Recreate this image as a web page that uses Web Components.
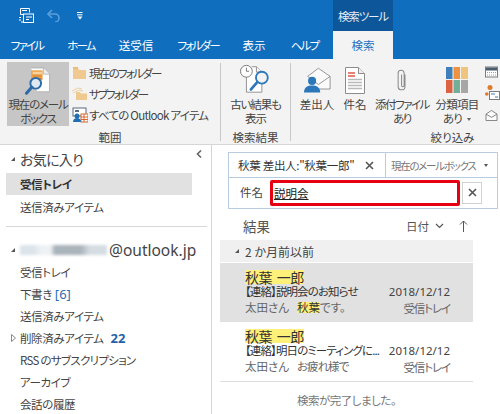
<!DOCTYPE html>
<html lang="ja"><head><meta charset="utf-8"><title>Outlook</title>
<style>
html,body{margin:0;padding:0;width:500px;height:414px;overflow:hidden;background:#fff;font-family:"Noto Sans CJK JP","Noto Sans",sans-serif;color:#444}
</style></head><body>
<ol-app></ol-app>
<script>
const FONT='"Noto Sans CJK JP","Noto Sans",sans-serif';
function def(name,css,html){
  customElements.define(name,class extends HTMLElement{
    constructor(){super();const r=this.attachShadow({mode:'open'});this._css=css;this._html=html;}
    connectedCallback(){const h=this._html;
      this.shadowRoot.innerHTML='<style>'+this._css+'*,:host{font-feature-settings:"palt" !important}</style>'+(typeof h==='function'?h(this):h);}
  });
}
const ICONS={
 mailbox:`<svg width="26" height="28" viewBox="0 0 34 36"><path d="M8 1h16l8 8v23H16" fill="#fff" stroke="#a8a8a8"/><path d="M24 1v8h8" fill="#eee" stroke="#a8a8a8"/><rect x="8" y="4" width="15" height="13" fill="#f0a54c"/><rect x="10" y="6" width="12" height="3" fill="#f7d3a2"/><rect x="10" y="11" width="12" height="1" fill="#c97a26"/><rect x="10" y="14" width="12" height="1" fill="#c97a26"/><circle cx="14" cy="21" r="7" fill="#dfe9f2" stroke="#2c6aa8" stroke-width="2.500"/><path d="M9 26 2 34" stroke="#2c6aa8" stroke-width="4" stroke-linecap="round"/></svg>`,
 folder:`<svg width="15" height="14" viewBox="0 0 15 14"><path d="M1 2.500h5l1.500 1.500H14V13H1z" fill="#efc98f"/><rect x="1" y="1" width="5" height="2" fill="#e9bd7b"/></svg>`,
 subfolder:`<svg width="16" height="14" viewBox="0 0 16 14"><path d="M0 4l6-3 4 1" fill="none" stroke="#ecd0a0"/><path d="M1 6l6-3 4 1" fill="none" stroke="#ecd0a0"/><path d="M4 5h4l1 1.500h6V13H4z" fill="#efc98f"/></svg>`,
 allitems:`<svg width="16" height="16" viewBox="0 0 16 16"><rect x="1" y="1" width="13" height="8" fill="#fff" stroke="#5a6d80"/><rect x="3" y="3" width="4" height="2" fill="#5a6d80"/><rect x="9" y="7" width="7" height="8" fill="#fff" stroke="#d9692c"/><path d="M9 10h7M9 12.500h7M12 7v8" stroke="#d9692c"/><circle cx="5" cy="9" r="2.500" fill="#1f6fb5"/><path d="M1 15c0-3 2-4 4-4s4 1 4 4z" fill="#1f6fb5"/></svg>`,
 old:`<svg width="31" height="30" viewBox="0 0 34 33"><path d="M7 9V31H24V9l-6-6h-5" fill="#fff" stroke="#8a8a8a"/><path d="M18 3v6h6" fill="#f3f3f3" stroke="#8a8a8a"/><circle cx="7" cy="8" r="6.500" fill="#fff" stroke="#6f6f6f"/><path d="M7 4v4h3" fill="none" stroke="#6f6f6f"/><circle cx="24" cy="15" r="6.500" fill="#f3f3f3" stroke="#2c76ba" stroke-width="2"/><path d="M19 20l-7 8" stroke="#2c76ba" stroke-width="3" stroke-linecap="round"/></svg>`,
 from:`<svg width="27" height="26" viewBox="0 0 30 28"><path d="M4 10 16 1l13 9v14H14" fill="#fbfbfb" stroke="#8c8c8c"/><path d="M4 10l12 9 13-9" fill="none" stroke="#8c8c8c"/><circle cx="9" cy="15" r="4.500" fill="#2c76ba"/><path d="M0 28c0-6 4-8 9-8s9 2 9 8z" fill="#2c76ba"/></svg>`,
 subject:`<svg width="20" height="27" viewBox="0 0 20 27"><path d="M.5.500h13l6 6v20H.5z" fill="#fff" stroke="#8c8c8c"/><path d="M13.500.500v6h6" fill="#eee" stroke="#8c8c8c"/><path d="M3 6h7M3 9h7" stroke="#dd5a45" stroke-width="1.300"/><path d="M3 12.500h14M3 15.500h14M3 18.500h14M3 21.500h14" stroke="#b9b9b9" stroke-width="1.300"/></svg>`,
 clip:`<svg width="12" height="26" viewBox="0 0 14 27"><path d="M10.500 7v14a4 4 0 0 1-8 0V5.500a3.500 3.500 0 0 1 7 0V20a1.500 1.500 0 0 1-3 0V7" fill="none" stroke="#8a8a8a" stroke-width="1.200"/></svg>`,
 cat:`<svg width="22" height="26" viewBox="0 0 22 26"><rect width="6.500" height="12" fill="#3f7fba"/><rect x="7.500" width="6.500" height="12" fill="#ee9240"/><rect x="15" width="7" height="12" fill="#efc47e"/><rect y="13" width="6.500" height="13" fill="#dd6244"/><rect x="7.500" y="13" width="6.500" height="13" fill="#72ae98"/><rect x="15" y="13" width="7" height="13" fill="#a6a6a6"/></svg>`,
 cal:`<svg width="13" height="12" viewBox="0 0 13 11"><rect x=".5" y=".5" width="12" height="10" fill="#fff" stroke="#7b7b7b"/><rect x="1" y="1" width="11" height="3" fill="#4b5c6c"/><path d="M2 6h9M2 8.500h9" stroke="#8da0b2" stroke-dasharray="1 1"/></svg>`,
 flag:`<svg width="15" height="15" viewBox="0 0 15 15"><circle cx="5" cy="2.500" r="2.500" fill="#e07b2c"/><circle cx="1.800" cy="9" r="1.800" fill="#e07b2c"/><rect x="4.500" y="6.500" width="10" height="8" fill="#fff" stroke="#7b7b7b"/><path d="M6 9h4M10 12h3" stroke="#3f7fba"/></svg>`,
 read:`<svg width="13" height="11" viewBox="0 0 13 12"><path d="M.5 4.500 6.500.5l6 4v7H.5z" fill="#fbfbfb" stroke="#7b7b7b"/><path d="M.5 4.500l6 3.500 6-3.500" fill="none" stroke="#7b7b7b"/></svg>`
};

def('ol-titlebar',`:host{display:flex;height:31px;background:#106ebe;align-items:center;color:#fff;font:11.5px ${FONT}}
 .ql{width:333px;display:flex;align-items:center;padding-left:19px;box-sizing:border-box;height:31px}
 .ql svg{display:block}.undo{margin-left:13px}.more{margin-left:16px}
 .tool{width:60px;height:31px;background:#0d5699;display:flex;align-items:center;justify-content:center;color:#e6eef6;white-space:nowrap;letter-spacing:-1.100px}`,
 `<div class="ql">
  <svg width="15" height="15" viewBox="0 0 15 15" fill="none" stroke="#fff"><path d="M1.500.500h9v4M1.500.500v6h3"/><path d="M3 2.500h5M0 9.500h2M0 12h2M2 14h2" /><rect x="4.500" y="6" width="10" height="8.500"/><path d="M7 9h6M7 11.500h3"/></svg>
  <svg class="undo" width="14" height="13" viewBox="0 0 14 13" fill="none" stroke="#5b9fd9" stroke-width="1.600"><path d="M5 1 1 5l4 4"/><path d="M1 5h7a4 4 0 0 1 0 8"/></svg>
  <svg class="more" width="6" height="8" viewBox="0 0 6 8"><path d="M0 .500h5.500M0 2.800h5.500" stroke="#fff"/><path d="M.5 4.500h5L3 7.500z" fill="#fff"/></svg>
 </div><div class="tool">検索ツール</div>`);

def('ol-tabs',`:host{display:flex;height:28px;background:#106ebe;font:11.5px ${FONT};color:#fff}
 span{display:flex;align-items:center;justify-content:center;height:27px;white-space:nowrap}
 .on{background:#f3f3f3;color:#1d74bf;height:28px}`,
 ()=>[['ファイル',54,-1.8],['ホーム',54,-1.8],['送受信',56,0],['フォルダー',68,-2],['表示',44,0],['ヘルプ',57,-1.8]].map(([t,w,l])=>`<span style="width:${w}px;letter-spacing:${l}px">${t}</span>`).join('')+'<span class="on" style="width:60px">検索</span>');

def('rb-group',`:host{display:flex;flex-direction:column;height:82px;box-sizing:border-box}
 .c{display:flex;height:63px}
 .l{height:19px;text-align:center;font:11.5px/24px ${FONT};color:#444;white-space:nowrap}`,
 e=>`<div class="c"><slot></slot></div><div class="l" style="padding-right:${e.getAttribute('lpad')||0}px;padding-left:${e.getAttribute('lpadl')||0}px">${e.getAttribute('label')}</div>`);

def('rb-large',`:host{display:flex;flex-direction:column;align-items:center;box-sizing:border-box;font:11.5px/13.500px ${FONT};color:#444;text-align:center;white-space:nowrap}
 :host([on]){background:#c6c6c6}
 .i{height:36px;box-sizing:border-box;display:flex;align-items:flex-start;justify-content:center}
 .i svg{display:block}`,
 e=>`<div class="i" style="padding-top:${e.getAttribute('ip')||5}px">${ICONS[e.getAttribute('icon')]}</div><div><slot></slot></div>`);

def('rb-small',`:host{display:flex;align-items:center;height:21px;font:11.5px ${FONT};color:#444;white-space:nowrap}
 .i{width:17px;display:flex;justify-content:center;margin-right:1px}`,
 e=>`<span class="i">${ICONS[e.getAttribute('icon')]}</span><slot></slot>`);

def('ol-ribbon',`:host{display:flex;height:86px;background:#f3f3f3;border-bottom:1px solid #d6d6d6;box-sizing:border-box;padding-top:3px;overflow:hidden}
 .sep{width:1px;height:78px;margin-top:1px;background:#c8c8c8;flex:none}
 .stack{display:flex;flex-direction:column;padding-top:1px;margin-left:2px}
 .side{display:flex;flex-direction:column;padding:4px 0 0 1px}
 .side span{display:block;line-height:0}
 .side span+span{margin-top:7px}.side span+span+span{margin-top:10px}
 .ar{display:inline-block;width:0;height:0;margin:0 0 2px 5px;border-left:2.500px solid transparent;border-right:2.500px solid transparent;border-top:3px solid #666}`,
 `<rb-group label="範囲" lpad="7" style="width:220px;padding-left:7px">
   <rb-large icon="mailbox" on style="width:62px;height:64px;letter-spacing:-1.200px">現在のメール<br>ボックス</rb-large>
   <div class="stack"><rb-small icon="folder" style="letter-spacing:-1.700px">現在のフォルダー</rb-small><rb-small icon="subfolder" style="letter-spacing:-2px">サブフォルダー</rb-small><rb-small icon="allitems" style="letter-spacing:-.75px">すべての Outlook アイテム</rb-small></div>
  </rb-group><i class="sep"></i>
  <rb-group label="検索結果" style="width:69px"><rb-large icon="old" ip="2" style="width:69px;letter-spacing:-1.100px">古い結果も<br>表示</rb-large></rb-group><i class="sep"></i>
  <rb-group label="絞り込み" lpadl="107" style="width:209px;padding-left:7px">
   <rb-large icon="from" style="width:38px">差出人</rb-large>
   <rb-large icon="subject" style="width:38px">件名</rb-large>
   <rb-large icon="clip" style="width:56px;letter-spacing:-1.500px">添付ファイル<br>あり</rb-large>
   <rb-large icon="cat" style="width:54px;letter-spacing:-.8px">分類項目<br>あり<i class="ar"></i></rb-large>
   <div class="side"><span>${ICONS.cal}</span><span>${ICONS.flag}</span><span>${ICONS.read}</span></div>
  </rb-group>`);

def('folder-row',`:host{display:flex;align-items:center;height:22px;padding-left:14px;font:11.5px ${FONT};color:#444;white-space:nowrap;position:relative;box-sizing:border-box;letter-spacing:-.4px}
 :host([sel]){background:#e1e1e1;font-weight:700;color:#333;width:186px}
 .t{position:absolute;left:5px;top:7px;display:block}
 .b{color:#2a6fb5;margin-left:3px;font:13px "Noto Sans",sans-serif;letter-spacing:0}
 .n{color:#1f62aa;font:700 13px "Noto Sans",sans-serif;margin-left:7px;letter-spacing:0}`,
 e=>`${e.hasAttribute('tri')?'<svg class="t" width="5" height="8" viewBox="0 0 5 8"><path d="M.5.500 4.500 4 .5 7.500z" fill="#fff" stroke="#888"/></svg>':''}<slot></slot>${e.getAttribute('bracket')?`<span class="b">[${e.getAttribute('bracket')}]</span>`:''}${e.getAttribute('num')?`<span class="n">${e.getAttribute('num')}</span>`:''}`);

def('folder-pane',`:host{display:block;width:212px;height:269px;box-sizing:border-box;border-right:1px solid #d4d4d4;position:relative;font-family:${FONT}}
 .wrap{padding:3px 0 0 6px}
 .h{display:flex;align-items:center;height:22px;font-size:14px;color:#444;padding-left:5px;gap:5px;margin-bottom:3px;letter-spacing:-.7px}
 .tr{width:0;height:0;border-right:4.500px solid #555;border-top:4.500px solid transparent}
 hr{border:0;border-top:1px solid #d8d8d8;margin:8px 4px 12px 0}
 .acct{display:flex;align-items:center;height:22px;padding-left:5px;gap:5px;font:15.500px "Noto Sans",sans-serif;color:#444}
 .blur{display:inline-block;width:87px;height:10px;background:linear-gradient(90deg,#dbe4ea 0 15%,#eef2f4 25% 35%,#aab4bb 40% 70%,#d5dde2 80% 100%);filter:blur(1.500px);margin-right:-3px}
 .col{position:absolute;left:196px;top:5px}
 `,
 `<div class="wrap">
   <svg class="col" width="6" height="8" viewBox="0 0 6 8"><path d="M5 .500 1.500 4 5 7.500" fill="none" stroke="#666" stroke-width="1.600"/></svg>
   <div class="h"><i class="tr"></i>お気に入り</div>
   <folder-row sel>受信トレイ</folder-row>
   <folder-row style="margin-top:1px">送信済みアイテム</folder-row>
   <hr>
   <div class="acct"><i class="tr"></i><span class="blur"></span>@outlook.jp</div>
   <folder-row>受信トレイ</folder-row>
   <folder-row bracket="6">下書き</folder-row>
   <folder-row>送信済みアイテム</folder-row>
   <folder-row tri num="22">削除済みアイテム</folder-row>
   <folder-row style="letter-spacing:-.7px">RSS のサブスクリプション</folder-row>
   <folder-row>アーカイブ</folder-row>
   <folder-row style="height:21px">会話の履歴</folder-row>
  </div>`);

def('search-box',`:host{display:block;margin-left:16px;width:270px;height:57px;box-sizing:border-box;border:1px solid #b9cde0;font:11.5px ${FONT};color:#444}
 .r1{display:flex;height:24px;border-bottom:1px solid #b9cde0}
 .q{width:157px;display:flex;align-items:center;padding-left:9px;box-sizing:border-box;color:#333;white-space:nowrap;border-right:1px solid #b9cde0;font-size:11.5px;letter-spacing:-.3px}
 .q span{flex:1}.q svg{margin-right:11px}
 .scope{flex:1;display:flex;align-items:center;padding-left:5px;color:#777;font-size:10.500px;white-space:nowrap;gap:9px;letter-spacing:-1.300px}
 .ar{width:0;height:0;border-left:2.500px solid transparent;border-right:2.500px solid transparent;border-top:3px solid #555}
 .r2{display:flex;align-items:center;height:31px}
 .k{width:41px;padding-left:11px;box-sizing:border-box;margin-top:-4px}
 .red{width:190px;height:26px;box-sizing:border-box;border:3px solid #e60012;border-radius:2px;display:flex;align-items:center;padding-left:1px;margin-top:-1px}
 .red u{color:#222;font-size:11.500px;text-decoration-thickness:1px}
 .x{width:20px;height:22px;box-sizing:border-box;border:1px solid #d2d2d2;margin-left:2px;margin-top:-2px;display:flex;align-items:center;justify-content:center}`,
 `<div class="r1"><div class="q"><span>秋葉 差出人:"秋葉一郎"</span><svg width="9" height="9" viewBox="0 0 9 9"><path d="M1 1l7 7M8 1 1 8" stroke="#555" stroke-width="1.600"/></svg></div><div class="scope">現在のメールボックス<i class="ar"></i></div></div>
  <div class="r2"><div class="k">件名</div><div class="red"><u>説明会</u></div><div class="x"><svg width="9" height="9" viewBox="0 0 9 9"><path d="M1 1l7 7M8 1 1 8" stroke="#555" stroke-width="1.600"/></svg></div></div>`);

def('msg-item',`:host{display:flex;height:59px;box-sizing:border-box;padding:7px 23px 0 25px;justify-content:space-between;font:11.5px ${FONT};color:#444}
 :host([sel]){background:#e1e1e1}
 .l{width:136px}.r{text-align:right}
 .n{font-size:14px;line-height:14px;height:13px;display:block;color:#333;white-space:pre;letter-spacing:-.6px}
 mark{display:inline-block;height:14px;line-height:14px;background:#fff07a;color:inherit}
 .s{display:block;line-height:16px;color:#333;white-space:nowrap;letter-spacing:-.9px}
 .p{display:block;line-height:16px;color:#666;white-space:nowrap;font-size:11.500px}
 .d{font:11.500px/17px "Noto Sans",sans-serif;color:#444;margin-top:13px}
 .b{line-height:17px;color:#666;font-size:11.500px;letter-spacing:-1.100px}`,
 e=>`<div class="l"><span class="n"><mark>${e.getAttribute('from')}</mark></span><span class="s">${e.getAttribute('subject')}</span><span class="p"><slot></slot></span></div>
  <div class="r"><div class="d">2018/12/12</div><div class="b">受信トレイ</div></div>`);

def('search-pane',`:host{display:block;width:288px;height:269px;font-family:${FONT}}
 .res{display:flex;align-items:center;height:28px;margin-top:3px;padding:0 32px 0 31px;font-size:13.500px;color:#555}
 .res .g{flex:1}.res .d{font-size:11.500px;color:#555;display:flex;align-items:center;gap:6px}
 .res svg{display:block}
 .list{width:253px;margin-left:8px}
 .gh{height:23px;box-sizing:border-box;background:#f0f0f0;border-bottom:1px solid #fff;display:flex;align-items:center;padding-left:15px;gap:6px;font-size:12px;color:#444}
 .tr{width:0;height:0;border-right:4.500px solid #555;border-top:4.500px solid transparent}
 .sep{border-top:1px solid #ddd}
 .done{width:253px;margin-left:8px;text-align:center;font-size:11.500px;color:#777;line-height:14px;margin-top:11px;letter-spacing:-.5px}
 .hl{display:inline-block;height:11px;line-height:11px;background:#fff07a;color:#333;margin-left:8px}
 .gap{margin-left:8px;letter-spacing:-1px}`,
 `<div style="height:7px"></div><search-box></search-box>
  <div class="res"><span class="g">結果</span><span class="d">日付<svg width="9" height="6" viewBox="0 0 9 6"><path d="M1 1l3.500 3.500L8 1" fill="none" stroke="#555" stroke-width="1.200"/></svg><svg style="margin-left:9px" width="9" height="12" viewBox="0 0 9 12"><path d="M4.500 12V1M1 4.500 4.500 1 8 4.500" fill="none" stroke="#555"/></svg></span></div>
  <div class="list"><div class="gh"><i class="tr"></i>2 か月前以前</div>
   <msg-item sel from="秋葉  一郎" subject="【連絡】説明会のお知らせ">太田さん<span class="hl">秋葉</span>です。</msg-item>
   <msg-item from="秋葉  一郎" subject="【連絡】明日のミーティングに...">太田さん<span class="gap">お疲れ様で</span></msg-item>
   <div class="sep"></div></div>
  <div class="done">検索が完了しました。</div>`);

def('ol-app',`:host{display:block;width:500px;height:414px;overflow:hidden}
 .main{display:flex;height:269px}`,
 `<ol-titlebar></ol-titlebar><ol-tabs></ol-tabs><ol-ribbon></ol-ribbon>
  <div class="main"><folder-pane></folder-pane><search-pane></search-pane></div>`);
</script></body></html>
